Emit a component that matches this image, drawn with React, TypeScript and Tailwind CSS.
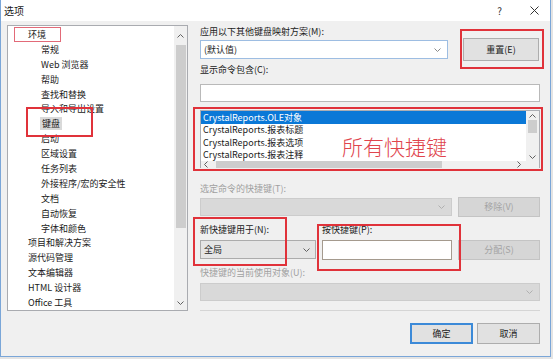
import React from 'react';

const treeItems: { label: string; level: number; selected?: boolean }[] = [
  { label: '环境', level: 0 },
  { label: '常规', level: 1 },
  { label: 'Web 浏览器', level: 1 },
  { label: '帮助', level: 1 },
  { label: '查找和替换', level: 1 },
  { label: '导入和导出设置', level: 1 },
  { label: '键盘', level: 1, selected: true },
  { label: '启动', level: 1 },
  { label: '区域设置', level: 1 },
  { label: '任务列表', level: 1 },
  { label: '外接程序/宏的安全性', level: 1 },
  { label: '文档', level: 1 },
  { label: '自动恢复', level: 1 },
  { label: '字体和颜色', level: 1 },
  { label: '项目和解决方案', level: 0 },
  { label: '源代码管理', level: 0 },
  { label: '文本编辑器', level: 0 },
  { label: 'HTML 设计器', level: 0 },
  { label: 'Office 工具', level: 0 },
];

const commands = [
  'CrystalReports.OLE对象',
  'CrystalReports.报表标题',
  'CrystalReports.报表选项',
  'CrystalReports.报表注释',
];

const Chevron: React.FC<{ dir?: 'up' | 'down' | 'left' | 'right'; color?: string }> = ({
  dir = 'down',
  color = '#606060',
}) => {
  const paths = {
    down: 'M0.5 0.5 L3.5 3.5 L6.5 0.5',
    up: 'M0.5 3.5 L3.5 0.5 L6.5 3.5',
    left: 'M3.5 0.5 L0.5 3.5 L3.5 6.5',
    right: 'M0.5 0.5 L3.5 3.5 L0.5 6.5',
  };
  const vertical = dir === 'up' || dir === 'down';
  return (
    <svg width={vertical ? 7 : 4} height={vertical ? 4 : 7} viewBox={vertical ? '0 0 7 4' : '0 0 4 7'}>
      <path d={paths[dir]} fill="none" stroke={color} strokeWidth="1" />
    </svg>
  );
};

const App: React.FC = () => {
  return (
    <div className="relative w-[553px] h-[359px] overflow-hidden bg-[#e4e4e4] font-['Noto_Sans_CJK_SC','Noto_Sans',sans-serif] text-[#1a1a1a]">
      <div className="w-[551px] h-[357px] flex flex-col border-l border-r border-b border-[#7aa6d8] bg-[#f0f0f0]">
        {/* Title bar */}
        <div className="h-[21px] bg-white flex items-center pl-[3px] pr-[11px]">
          <span className="text-[10px] leading-none">选项</span>
          <span className="ml-auto text-[10px] leading-none text-[#333]">?</span>
          <svg className="ml-[28px]" width="9" height="9" viewBox="0 0 9 9">
            <path d="M0.5 0.5 L8.5 8.5 M8.5 0.5 L0.5 8.5" stroke="#333" strokeWidth="1" />
          </svg>
        </div>

        {/* Body */}
        <div className="flex-1 flex pl-[6px]">
          {/* Tree */}
          <div className="mt-[4px] w-[181px] h-[286px] border border-[#a9abb0] bg-white flex">
            <div className="flex-1 pt-[1px]">
              {treeItems.map((item) => (
                <div
                  key={item.label}
                  className={`h-[14.9px] flex items-center text-[9px] leading-none whitespace-nowrap ${
                    item.level === 0 ? 'pl-[19px]' : 'pl-[32px]'
                  }`}
                >
                  <span className={item.selected ? 'bg-[#d9d9d9] px-[2px] py-[2px]' : 'px-[1px]'}>{item.label}</span>
                </div>
              ))}
            </div>
            <div className="w-[13px] bg-[#f0f0f0] flex flex-col items-center">
              <div className="h-[19px] flex items-center">
                <Chevron dir="up" />
              </div>
              <div className="w-[10px] h-[183px] bg-[#cdcdcd]" />
              <div className="flex-1" />
              <div className="h-[14px] flex items-center">
                <Chevron dir="down" />
              </div>
            </div>
          </div>

          {/* Right pane */}
          <div className="ml-[12px] w-[340px] pt-[5px] flex flex-col text-[9px]">
            <div className="h-[12px] leading-[12px]">应用以下其他键盘映射方案(M):</div>
            <div className="h-[23px] flex items-center">
              <div className="w-[248px] h-[19px] bg-white border border-[#9dbde2] flex items-center pl-[3px] pr-[6px]">
                <span>(默认值)</span>
                <span className="ml-auto">
                  <Chevron color="#8a8a8a" />
                </span>
              </div>
              <div className="ml-[15px] w-[76px] h-[23px] bg-[#e1e1e1] border border-[#adadad] flex items-center justify-center">
                重置(E)
              </div>
            </div>

            <div className="mt-[3px] h-[12px] leading-[12px]">显示命令包含(C):</div>
            <div className="mt-[8px] h-[18px] bg-white border border-[#b9b9b9]" />

            {/* Command list */}
            <div className="mt-[8px] h-[58px] bg-white border border-[#abadb3] flex flex-col">
              <div className="flex-1 flex">
                <div className="flex-1">
                  {commands.map((c, i) => (
                    <div
                      key={c}
                      className={`h-[12.5px] flex items-center pl-[2px] leading-none whitespace-nowrap ${
                        i === 0 ? 'bg-[#0a78d7] text-white' : ''
                      }`}
                    >
                      {c}
                    </div>
                  ))}
                </div>
                <div className="w-[13px] bg-[#f0f0f0] flex flex-col items-center">
                  <div className="h-[9px] flex items-center">
                    <Chevron dir="up" />
                  </div>
                  <div className="w-[9px] h-[13px] bg-[#cdcdcd]" />
                  <div className="flex-1" />
                  <div className="h-[9px] flex items-center">
                    <Chevron dir="down" />
                  </div>
                </div>
              </div>
              <div className="h-[8px] bg-[#f0f0f0] flex items-center pl-[3px] pr-[18px]">
                <Chevron dir="left" />
                <div className="ml-[8px] w-[226px] h-[7px] bg-[#cdcdcd]" />
                <span className="ml-auto">
                  <Chevron dir="right" />
                </span>
              </div>
            </div>

            <div className="mt-[15px] h-[12px] leading-[12px] text-[#a0a0a0]">选定命令的快捷键(T):</div>
            <div className="mt-[2px] h-[20px] flex">
              <div className="w-[252px] h-[18px] mt-[1px] bg-[#d9d9d9] border border-[#cccccc] flex items-center justify-end pr-[6px]">
                <Chevron color="#b0b0b0" />
              </div>
              <div className="ml-[6px] flex-1 bg-[#d6d6d6] border border-[#c4c4c4] flex items-center justify-center text-[#a3a3a3]">
                移除(V)
              </div>
            </div>

            <div className="mt-[7px] h-[12px] leading-[12px] flex">
              <span className="w-[122px]">新快捷键用于(N):</span>
              <span>按快捷键(P):</span>
            </div>
            <div className="mt-[4px] h-[20px] flex">
              <div className="w-[116px] h-[19px] bg-[#e5e5e5] border border-[#acacac] flex items-center pl-[3px] pr-[5px]">
                <span>全局</span>
                <span className="ml-auto">
                  <Chevron />
                </span>
              </div>
              <div className="ml-[6px] w-[130px] h-[20px] bg-white border border-[#a49a8e]" />
              <div className="ml-[6px] flex-1 bg-[#d6d6d6] border border-[#c4c4c4] flex items-center justify-center text-[#a3a3a3]">
                分配(S)
              </div>
            </div>

            <div className="mt-[7px] h-[12px] leading-[12px] text-[#a0a0a0]">快捷键的当前使用对象(U):</div>
            <div className="mt-[4px] h-[18px] bg-[#d9d9d9] border border-[#cccccc] flex items-center justify-end pr-[6px]">
              <Chevron color="#b0b0b0" />
            </div>

            <div className="mt-[9px] h-[1px] bg-[#d5d5d5]" />

            <div className="mt-[12px] flex justify-end gap-[4px]">
              <div className="w-[63px] h-[21px] bg-[#e1e1e1] border-2 border-[#3c8ad8] flex items-center justify-center">
                确定
              </div>
              <div className="w-[63px] h-[21px] bg-[#e1e1e1] border border-[#adadad] flex items-center justify-center">
                取消
              </div>
            </div>
          </div>
        </div>
      </div>

      {/* Red annotations */}
      <div className="absolute left-[14px] top-[27px] w-[47px] h-[15px] border border-[#e26a78]" />
      <div className="absolute left-[26px] top-[107px] w-[67px] h-[30px] border-2 border-[#e0323a]" />
      <div className="absolute left-[460px] top-[29px] w-[84px] h-[40px] border-2 border-[#e0323a]" />
      <div className="absolute left-[193px] top-[107px] w-[350px] h-[64px] border-2 border-[#e0323a]" />
      <div className="absolute left-[193px] top-[217px] w-[94px] h-[49px] border-2 border-[#e0323a]" />
      <div className="absolute left-[317px] top-[224px] w-[144px] h-[47px] border-2 border-[#e0323a]" />
      <div className="absolute left-[342px] top-[133px] text-[21px] leading-[26px] font-light text-[#e0454d] whitespace-nowrap">
        所有快捷键
      </div>
    </div>
  );
};

export default App;
